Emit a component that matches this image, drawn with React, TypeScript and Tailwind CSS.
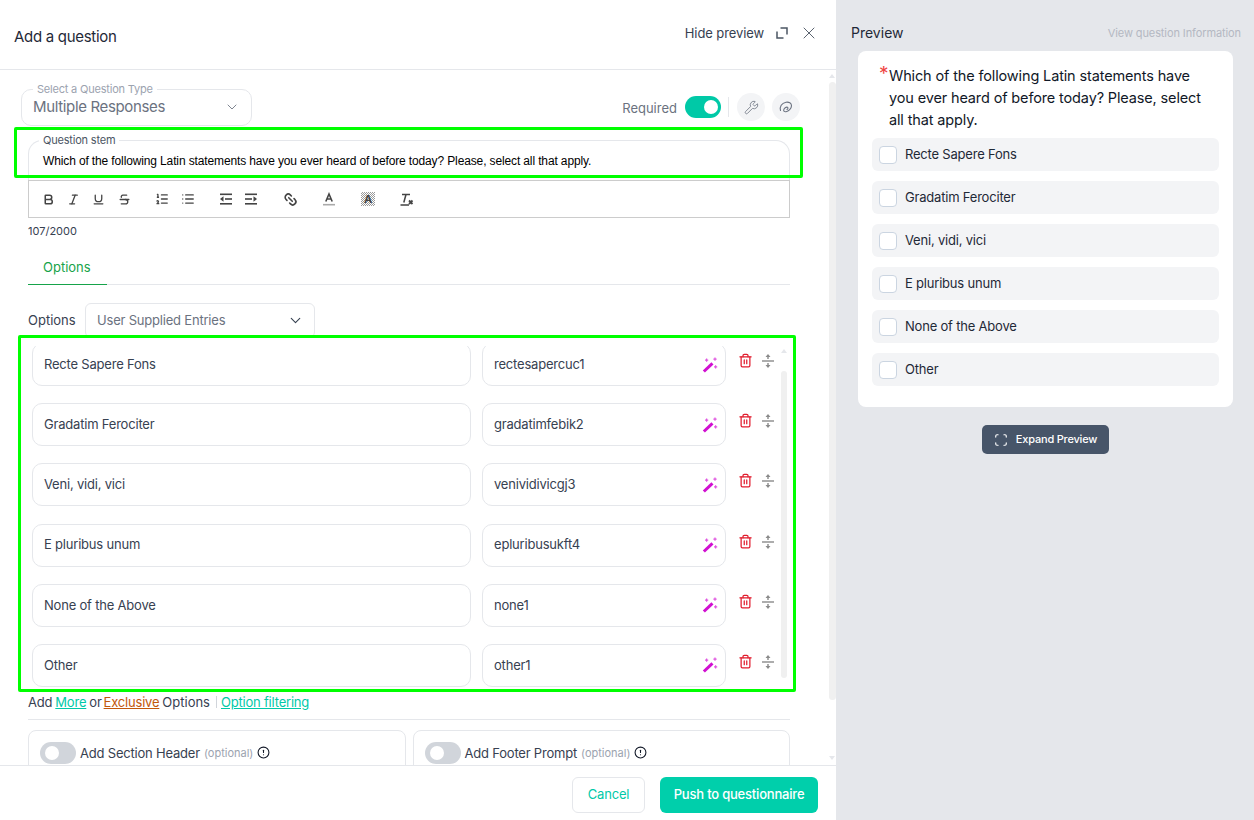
import { Bold, ChevronDown, CircleAlert, Italic, List, ListOrdered, Scan, Strikethrough, Trash2, Underline, Wrench, X, Link2 } from 'lucide-react';

const rows = [
  ['Recte Sapere Fons', 'rectesapercuc1'],
  ['Gradatim Ferociter', 'gradatimfebik2'],
  ['Veni, vidi, vici', 'venividivicgj3'],
  ['E pluribus unum', 'epluribusukft4'],
  ['None of the Above', 'none1'],
  ['Other', 'other1'],
];

const previewOptions = rows.map((r) => r[0]);

const WandIcon = () => (
  <svg width="16" height="16" viewBox="0 0 16 16" fill="#d10fd1">
    <path d="M.8 13.400 9.400 5.200l2.100 2.200-8.600 8.200z" />
    <path d="M4 1.500h1.200v1h1v1.200h-1v1H4v-1H3V2.500h1zM12.400 .6h1.200v1h1v1.200h-1v1h-1.200v-1h-1V1.600h1zM13 8.200h1.200v1h1v1.200h-1v1H13v-1h-1V9.200h1z" opacity="0.7" />
  </svg>
);

const SortIcon = () => (
  <svg width="14" height="16" viewBox="0 0 14 16" fill="#8a8a8a">
    <rect x="1" y="7.300" width="12" height="1.400" />
    <path d="M7 1 9.500 4H7.700v2H6.300V4H4.500zM7 15 4.500 12h1.800v-2h1.400v2h1.800z" />
  </svg>
);

const SwirlIcon = () => (
  <svg width="16" height="16" viewBox="0 0 16 16" fill="none" stroke="#6b7280" strokeWidth="1.100" strokeLinecap="round">
    <path d="M2.500 11.500C1.500 8 3.500 4 8 3.200c3-.5 5.500 1 5.500 3.500 0 3-3 5.500-5.500 6-1.500.3-2.500-.5-2.300-1.700.3-1.800 2.500-3.300 3.800-2.700.8.400.5 1.600-.5 2.200" />
  </svg>
);

const ExpandIcon = () => (
  <svg width="14" height="14" viewBox="0 0 14 14" fill="none" stroke="#4b5563" strokeWidth="1.500">
    <path d="M5.500 2H12v6.500M2 5.500V12h6.500" />
  </svg>
);

const OutdentIcon = ({ flip }: { flip?: boolean }) => (
  <svg width="14" height="14" viewBox="0 0 14 14" fill="#444444" className={flip ? '-scale-x-100' : ''}>
    <rect x="1" y="1.500" width="12" height="1.600" />
    <rect x="1" y="11" width="12" height="1.600" />
    <rect x="6" y="6.200" width="7" height="1.600" />
    <path d="M1 7 4.500 4.200v5.600z" />
  </svg>
);

const ClearFormatIcon = () => (
  <svg width="15" height="15" viewBox="0 0 15 15" fill="none" stroke="#444444" strokeWidth="1.500">
    <path d="M3 2.500h8M7 2.500 4.800 10.500M1.500 13h8.500" />
    <path d="m10 8.500 3.500 3.500M13.500 8.500 10 12" strokeWidth="1.800" />
  </svg>
);

const ColorIcon = () => (
  <svg width="14" height="14" viewBox="0 0 14 14" fill="none" stroke="#444444" strokeWidth="1.600">
    <path d="M3.800 9.500 7 2l3.200 7.500M4.800 7h4.400" />
    <path d="M1 12.700h12" stroke="#aaaaaa" />
  </svg>
);

const Toggle = ({ on }: { on?: boolean }) => (
  <div className={on ? 'flex h-[22px] w-9 shrink-0 items-center justify-end rounded-full bg-[#00c9a7] pr-[3px]' : 'flex h-[22px] w-9 shrink-0 items-center rounded-full bg-[#d1d5db] pl-[5px]'}>
    <div className="h-[14px] w-[14px] rounded-full bg-white" />
  </div>
);

const App = () => {
  return (
    <div className="relative flex h-[820px] w-[1254px] overflow-hidden bg-[#e5e7eb] font-['Inter',sans-serif] tracking-[-0.2px] text-[#1f2937]">
      {/* editor panel */}
      <div className="flex h-full w-[836px] flex-col bg-white">
        <div className="flex h-[70px] shrink-0 items-start justify-between border-b border-[#e5e7eb] pl-[14px] pr-[17px]">
          <h2 className="mt-[27px] text-[15px] leading-5 tracking-[-0.3px] text-[#1f2937]">Add a question</h2>
          <div className="mt-[23px] flex items-center text-[#4b5563]">
            <span className="mr-[11px] text-[13px] leading-[18px] tracking-[-0.1px] text-[#374151]">Hide preview</span>
            <ExpandIcon />
            <X size={20} strokeWidth={1.100} className="ml-[10px]" />
          </div>
        </div>

        <div className="flex min-h-0 flex-1">
          <div className="w-[828px] overflow-hidden">
            <div className="flex items-start justify-between pl-[21px] pr-[28px] pt-[12px]">
              <fieldset className="h-[44px] w-[231px] rounded-[10px] border border-[#e5e7eb] pl-[11px] pr-[11px]">
                <legend className="px-[4px] text-[11px] leading-[14px] text-[#9ca3af]">Select a Question Type</legend>
                <div className="mt-[1px] flex items-center justify-between">
                  <span className="text-[15px] leading-5 tracking-[-0.35px] text-[#6b7280]">Multiple Responses</span>
                  <ChevronDown size={16} strokeWidth={1.300} className="text-[#6b7280]" />
                </div>
              </fieldset>
              <div className="mt-[11px] flex items-center">
                <span className="mr-[8px] translate-y-[1px] text-[13px] leading-[22px] tracking-normal text-[#6b7280]">Required</span>
                <Toggle on />
                <div className="ml-[7px] mr-[8px] h-[20px] w-px bg-[#e5e7eb]" />
                <div className="flex h-[28px] w-[28px] items-center justify-center rounded-full bg-[#f3f4f6]">
                  <Wrench size={15} strokeWidth={1.300} className="text-[#6b7280]" />
                </div>
                <div className="ml-[7px] flex h-[28px] w-[28px] items-center justify-center rounded-full bg-[#f3f4f6]">
                  <SwirlIcon />
                </div>
              </div>
            </div>

            <div className="pl-[28px] pr-[38px]">
              <fieldset className="mt-[7px] h-[47px] rounded-t-[14px] border border-b-0 border-[#e5e7eb] pl-[10px]">
                <legend className="px-[4px] text-[11px] leading-[14px] text-[#4b5563]">Question stem</legend>
                <p className="mt-[6px] pl-[4px] font-['Liberation_Sans',sans-serif] text-[12px] leading-4 tracking-[-0.13px] text-black">
                  Which of the following Latin statements have you ever heard of before today? Please, select all that apply.
                </p>
              </fieldset>
              <div className="flex h-[38px] items-center border border-[#cccccc] pl-[13px] text-[#444444]">
                <Bold size={13} strokeWidth={2.800} />
                <Italic size={13} strokeWidth={2.400} className="ml-[12px]" />
                <Underline size={13} strokeWidth={2.400} className="ml-[12px]" />
                <Strikethrough size={13} strokeWidth={2.400} className="ml-[13px]" />
                <ListOrdered size={14} strokeWidth={2.200} className="ml-[24px]" />
                <List size={14} strokeWidth={2.200} className="ml-[12px]" />
                <div className="ml-[24px] flex gap-[11px]">
                  <OutdentIcon />
                  <OutdentIcon flip />
                </div>
                <Link2 size={15} strokeWidth={2.600} className="ml-[25px] rotate-45" />
                <div className="ml-[24px]"><ColorIcon /></div>
                <div className="ml-[25px] flex h-[14px] w-[14px] items-center justify-center bg-[repeating-conic-gradient(#9a9a9a_0_25%,#ffffff_0_50%)] bg-[length:2px_2px] text-[11px] font-bold leading-none tracking-normal">A</div>
                <div className="ml-[24px]"><ClearFormatIcon /></div>
              </div>
              <p className="mt-[6px] text-[11px] leading-[14px] tracking-normal text-[#374151]">107/2000</p>

              <div className="mt-[14px] flex h-[33px] border-b border-[#e5e7eb]">
                <div className="-mb-px w-[79px] border-b border-[#16a34a] pl-[15px] pt-[6px] text-[13px] leading-[18px] tracking-normal text-[#16a34a]">Options</div>
              </div>

              <div className="mt-[18px] flex items-center">
                <span className="w-[57px] text-[13px] tracking-normal text-[#374151]">Options</span>
                <div className="flex h-[35px] w-[230px] items-center justify-between rounded-[6px] border border-[#e5e7eb] pl-[11px] pr-[10px]">
                  <span className="text-[13px] text-[#6b7280]">User Supplied Entries</span>
                  <ChevronDown size={17} strokeWidth={1.600} className="text-[#374151]" />
                </div>
              </div>

              <div className="mt-[8px] flex h-[343px]">
                <div className="w-[750px] overflow-hidden pl-[4px]">
                  <div className="-mt-[3px] flex flex-col gap-[17.200px]">
                    {rows.map(([label, code]) => (
                      <div key={code} className="flex h-[43px] items-start">
                        <div className="flex h-[43px] w-[439px] items-center rounded-[10px] border border-[#e5e7eb] pl-[11px] text-[13px] text-[#374151]">{label}</div>
                        <div className="ml-[11px] flex h-[43px] w-[244px] items-center justify-between rounded-[10px] border border-[#e5e7eb] pl-[11px] pr-[7px] text-[13px] text-[#374151]">
                          <span>{code}</span>
                          <WandIcon />
                        </div>
                        <Trash2 size={15} strokeWidth={2} className="ml-[12px] mt-[10px] text-[#e11d2e]" />
                        <div className="ml-[8px] mt-[10px]"><SortIcon /></div>
                      </div>
                    ))}
                  </div>
                </div>
                <div className="flex w-[12px] flex-col items-center">
                  <div className="mt-[3px] h-0 w-0 border-x-[3px] border-b-[4px] border-x-transparent border-b-[#e5e7eb]" />
                  <div className="mt-[18px] h-[307px] w-[6px] rounded-full bg-[#f0f0f0]" />
                </div>
              </div>

              <div className="mt-[4px] flex items-center text-[13px] leading-[18px] text-[#374151]">
                <span>Add</span>
                <span className="ml-[3px] text-[#00c9a7] underline">More</span>
                <span className="ml-[3px]">or</span>
                <span className="ml-[2px] text-[#c2570c] underline">Exclusive</span>
                <span className="ml-[3px] tracking-normal">Options</span>
                <div className="ml-[6px] h-[12px] w-px bg-[#d1d5db]" />
                <span className="ml-[4px] text-[#00c9a7] underline">Option filtering</span>
              </div>

              <div className="mt-[8px] border-t border-[#e5e7eb] pt-[10px]">
                <div className="flex gap-[7px]">
                  <div className="flex h-[60px] flex-1 items-start rounded-[8px] border border-[#e5e7eb] pl-[11px] pt-[11px] text-[13px] leading-[22px] text-[#374151]">
                    <Toggle />
                    <span className="ml-[4px]">Add Section Header</span>
                    <span className="ml-[4px] text-[11px] tracking-normal text-[#9ca3af]">(optional)</span>
                    <CircleAlert size={13} className="ml-[4px] mt-[4px] text-[#111827]" />
                  </div>
                  <div className="flex h-[60px] flex-1 items-start rounded-[8px] border border-[#e5e7eb] pl-[11px] pt-[11px] text-[13px] leading-[22px] text-[#374151]">
                    <Toggle />
                    <span className="ml-[4px]">Add Footer Prompt</span>
                    <span className="ml-[4px] text-[11px] tracking-normal text-[#9ca3af]">(optional)</span>
                    <CircleAlert size={13} className="ml-[4px] mt-[4px] text-[#111827]" />
                  </div>
                </div>
              </div>
            </div>
          </div>
          <div className="flex w-[8px] flex-col items-center">
            <div className="mt-[4px] h-0 w-0 border-x-[3px] border-b-[4px] border-x-transparent border-b-[#e5e7eb]" />
            <div className="mt-[4px] h-[618px] w-[7px] rounded-full bg-[#f0f0f0]" />
            <div className="mt-[56px] h-0 w-0 border-x-[3px] border-t-[4px] border-x-transparent border-t-[#e5e7eb]" />
          </div>
        </div>

        <div className="flex h-[55px] shrink-0 items-start justify-end gap-[15px] border-t border-[#e5e7eb] pr-[18px] pt-[11px]">
          <button className="h-[36px] w-[73px] rounded-[6px] border border-[#e5e7eb] text-[13px] text-[#00c9a7]">Cancel</button>
          <button className="h-[36px] w-[158px] rounded-[6px] bg-[#00cfab] text-[13px] font-medium text-white">Push to questionnaire</button>
        </div>
      </div>

      {/* preview panel */}
      <div className="flex w-[418px] flex-col pl-[15px] pr-[13px]">
        <div className="flex h-[51px] items-start justify-between pt-[24px]">
          <span className="text-[14px] leading-[18px] tracking-normal text-[#1f2937]">Preview</span>
          <span className="text-[11px] leading-[18px] tracking-[-0.1px] text-[#b4b8c2]">View question Information</span>
        </div>
        <div className="ml-[7px] w-[375px] rounded-[8px] bg-white px-[14px] pb-[21px] pt-[14px]">
          <div className="flex pl-[7px]">
            <span className="h-[22px] w-[10px] shrink-0 text-[19px] leading-[18px] text-[#ef4444]">*</span>
            <p className="w-[322px] text-[14.5px] leading-[22px] tracking-[-0.14px] text-[#111827]">
              Which of the following Latin statements have you ever heard of before today? Please, select all that apply.
            </p>
          </div>
          <div className="mt-[7px] flex flex-col gap-[10px]">
            {previewOptions.map((o) => (
              <div key={o} className="flex h-[33px] items-center rounded-[6px] bg-[#f3f4f6] pl-[7px]">
                <div className="h-[18px] w-[18px] rounded-[4px] border border-[#cbd5e1] bg-white" />
                <span className="ml-[8px] text-[13px] text-[#1f2937]">{o}</span>
              </div>
            ))}
          </div>
        </div>
        <div className="mt-[18px] flex justify-center pr-[1px]">
          <button className="flex h-[29px] w-[127px] items-center justify-center gap-[8px] rounded-[5px] bg-[#475569] text-[11px] font-medium text-white">
            <Scan size={14} strokeWidth={2} />
            Expand Preview
          </button>
        </div>
      </div>

      {/* review highlights drawn over the screenshot */}
      <div className="pointer-events-none absolute left-[14px] top-[127px] h-[51px] w-[789px] rounded-[2px] border-[3px] border-[#00ff00]" />
      <div className="pointer-events-none absolute left-[18px] top-[335px] h-[357px] w-[778px] rounded-[2px] border-[3px] border-[#00ff00]" />
    </div>
  );
};

export default App;
